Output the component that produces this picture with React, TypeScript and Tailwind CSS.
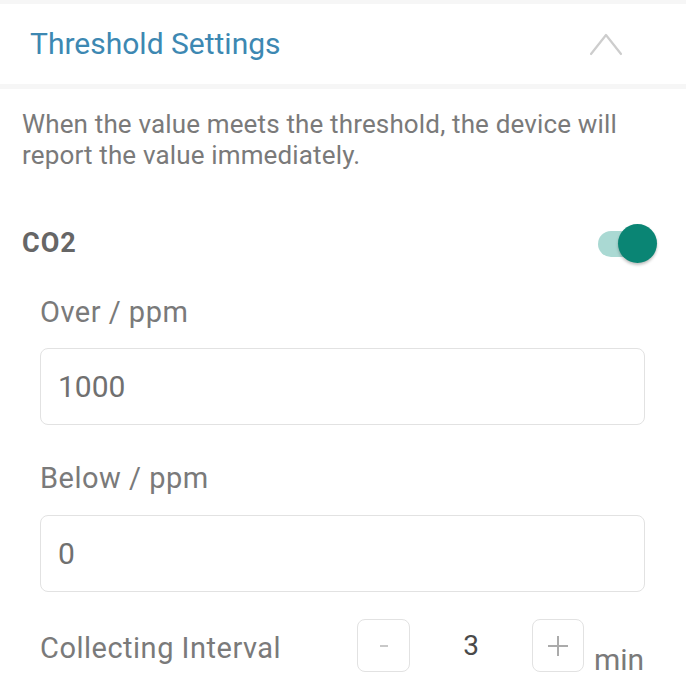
import React from "react";

export default function App() {
  return (
    <div className="w-[686px] h-[684px] bg-white overflow-hidden" style={{ fontFamily: "Roboto, 'Noto Sans', sans-serif" }}>
      <div className="h-[4px] bg-[#f6f6f6]" />
      <div className="h-[80px] flex items-center justify-between pl-[30px] pr-[63px]">
        <span className="text-[30px] text-[#3d88b2] leading-none">Threshold Settings</span>
        <svg width="34" height="24" viewBox="0 0 34 24" fill="none">
          <path d="M2 22 L17 3 L32 22" stroke="#cdcdcd" strokeWidth="2.2" strokeLinecap="round" strokeLinejoin="round" />
        </svg>
      </div>
      <div className="h-[5px] bg-[#f6f6f6]" />
      <div className="px-[22px]">
        <p className="mt-[20px] text-[26px] leading-[31px] tracking-[0.15px] text-[#7a7a7a]">
          When the value meets the threshold, the device will report the value immediately.
        </p>
        <div className="mt-[52px] flex items-center justify-between h-[40px]">
          <span className="text-[27px] font-bold tracking-[1px] text-[#666]">CO2</span>
          <div className="relative w-[64px] h-[40px] mr-[4px]">
            <div className="absolute left-[2px] top-[8px] w-[46px] h-[26px] rounded-full bg-[#aad9d3]" />
            <div className="absolute right-[3px] top-[1px] w-[39px] h-[39px] rounded-full bg-[#0a8574] shadow-[0_2px_3px_rgba(0,0,0,0.25)]" />
          </div>
        </div>
        <div className="pl-[18px] pr-[19px]">
          <div className="mt-[34px] text-[29px] leading-[30px] tracking-[0.5px] text-[#7a7a7a]">Over / ppm</div>
          <div className="mt-[21px] h-[77px] border-[1.5px] border-[#e2e2e2] rounded-[8px] flex items-center pl-[17px] text-[30px] text-[#707070]">1000</div>
          <div className="mt-[38px] text-[29px] leading-[30px] tracking-[0.5px] text-[#7a7a7a]">Below / ppm</div>
          <div className="mt-[22px] h-[77px] border-[1.5px] border-[#e2e2e2] rounded-[8px] flex items-center pl-[17px] text-[30px] text-[#707070]">0</div>
          <div className="mt-[27px] flex items-center h-[53px]">
            <span className="text-[29px] tracking-[0.5px] text-[#7a7a7a] w-[317px] mt-[6px]">Collecting Interval</span>
            <div className="w-[53px] h-[53px] border-[1.5px] border-[#e2e2e2] rounded-[8px] flex items-center justify-center">
              <svg width="10" height="4" viewBox="0 0 10 4"><path d="M1 2 H9" stroke="#c8c8c8" strokeWidth="2" /></svg>
            </div>
            <div className="w-[122px] text-center text-[28px] text-[#4a4a4a]">3</div>
            <div className="w-[52px] h-[53px] border-[1.5px] border-[#e2e2e2] rounded-[8px] flex items-center justify-center">
              <svg width="22" height="22" viewBox="0 0 22 22"><path d="M11 1 V21 M1 11 H21" stroke="#ababab" strokeWidth="2" /></svg>
            </div>
            <span className="ml-[10px] text-[30px] text-[#7a7a7a] self-end leading-[30px] -mb-[3px]">min</span>
          </div>
        </div>
      </div>
    </div>
  );
}
